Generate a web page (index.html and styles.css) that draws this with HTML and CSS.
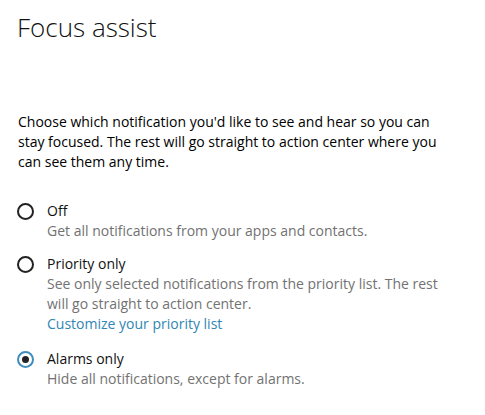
FILE: index.html
```html
<!DOCTYPE html>
<html lang="en">
<head>
    <meta charset="UTF-8">
    <title>Focus assist</title>
    <link rel="stylesheet" href="styles.css">
</head>
<body>
    <h1>Focus assist</h1>

    <p class="intro">
        Choose which notification you'd like to see and hear so you can stay focused. The rest will go straight to action center where you can see them any time.
    </p>

    <div class="options">
        <label class="option option-off">
            <span class="radio"></span>
            <span class="option-text">
                <span class="option-title">Off</span>
                <span class="option-desc">Get all notifications from your apps and contacts.</span>
            </span>
        </label>

        <label class="option option-priority">
            <span class="radio"></span>
            <span class="option-text">
                <span class="option-title">Priority only</span>
                <span class="option-desc">See only selected notifications from the priority list. The rest will go straight to action center.</span>
                <a class="option-link" href="#">Customize your priority list</a>
            </span>
        </label>

        <label class="option option-alarms">
            <span class="radio checked"></span>
            <span class="option-text">
                <span class="option-title">Alarms only</span>
                <span class="option-desc">Hide all notifications, except for alarms.</span>
            </span>
        </label>
    </div>
</body>
</html>
```

FILE: styles.css
```css
body {
    margin: 0;
    padding: 0 17px;
    background-color: #fff;
    font-family: "Open Sans", "Noto Sans", sans-serif;
    font-size: 14px;
    line-height: 20px;
    color: #000;
}

h1 {
    margin: 9px 0 0;
    font-size: 26px;
    line-height: 36px;
    font-weight: 300;
    color: #111;
}

.intro {
    width: 440px;
    margin: 67px 0 0 1px;
}

.options {
    display: flex;
    flex-direction: column;
}

.option {
    display: flex;
    gap: 13px;
}

.option-off {
    margin-top: 29px;
}

.option-priority {
    margin-top: 13px;
}

.option-alarms {
    margin-top: 15px;
}

.radio {
    box-sizing: border-box;
    flex: none;
    width: 17px;
    height: 17px;
    margin-top: 2px;
    border: 2px solid #222;
    border-radius: 50%;
    display: flex;
    align-items: center;
    justify-content: center;
}

.radio.checked {
    border-color: #3f8dbb;
}

.radio.checked::after {
    content: "";
    width: 7px;
    height: 7px;
    border-radius: 50%;
    background-color: #222;
}

.option-text {
    display: flex;
    flex-direction: column;
    width: 400px;
}

.option-title {
    color: #111;
}

.option-desc {
    color: #727272;
}

.option-link {
    color: #2f86b3;
    text-decoration: none;
}
```
